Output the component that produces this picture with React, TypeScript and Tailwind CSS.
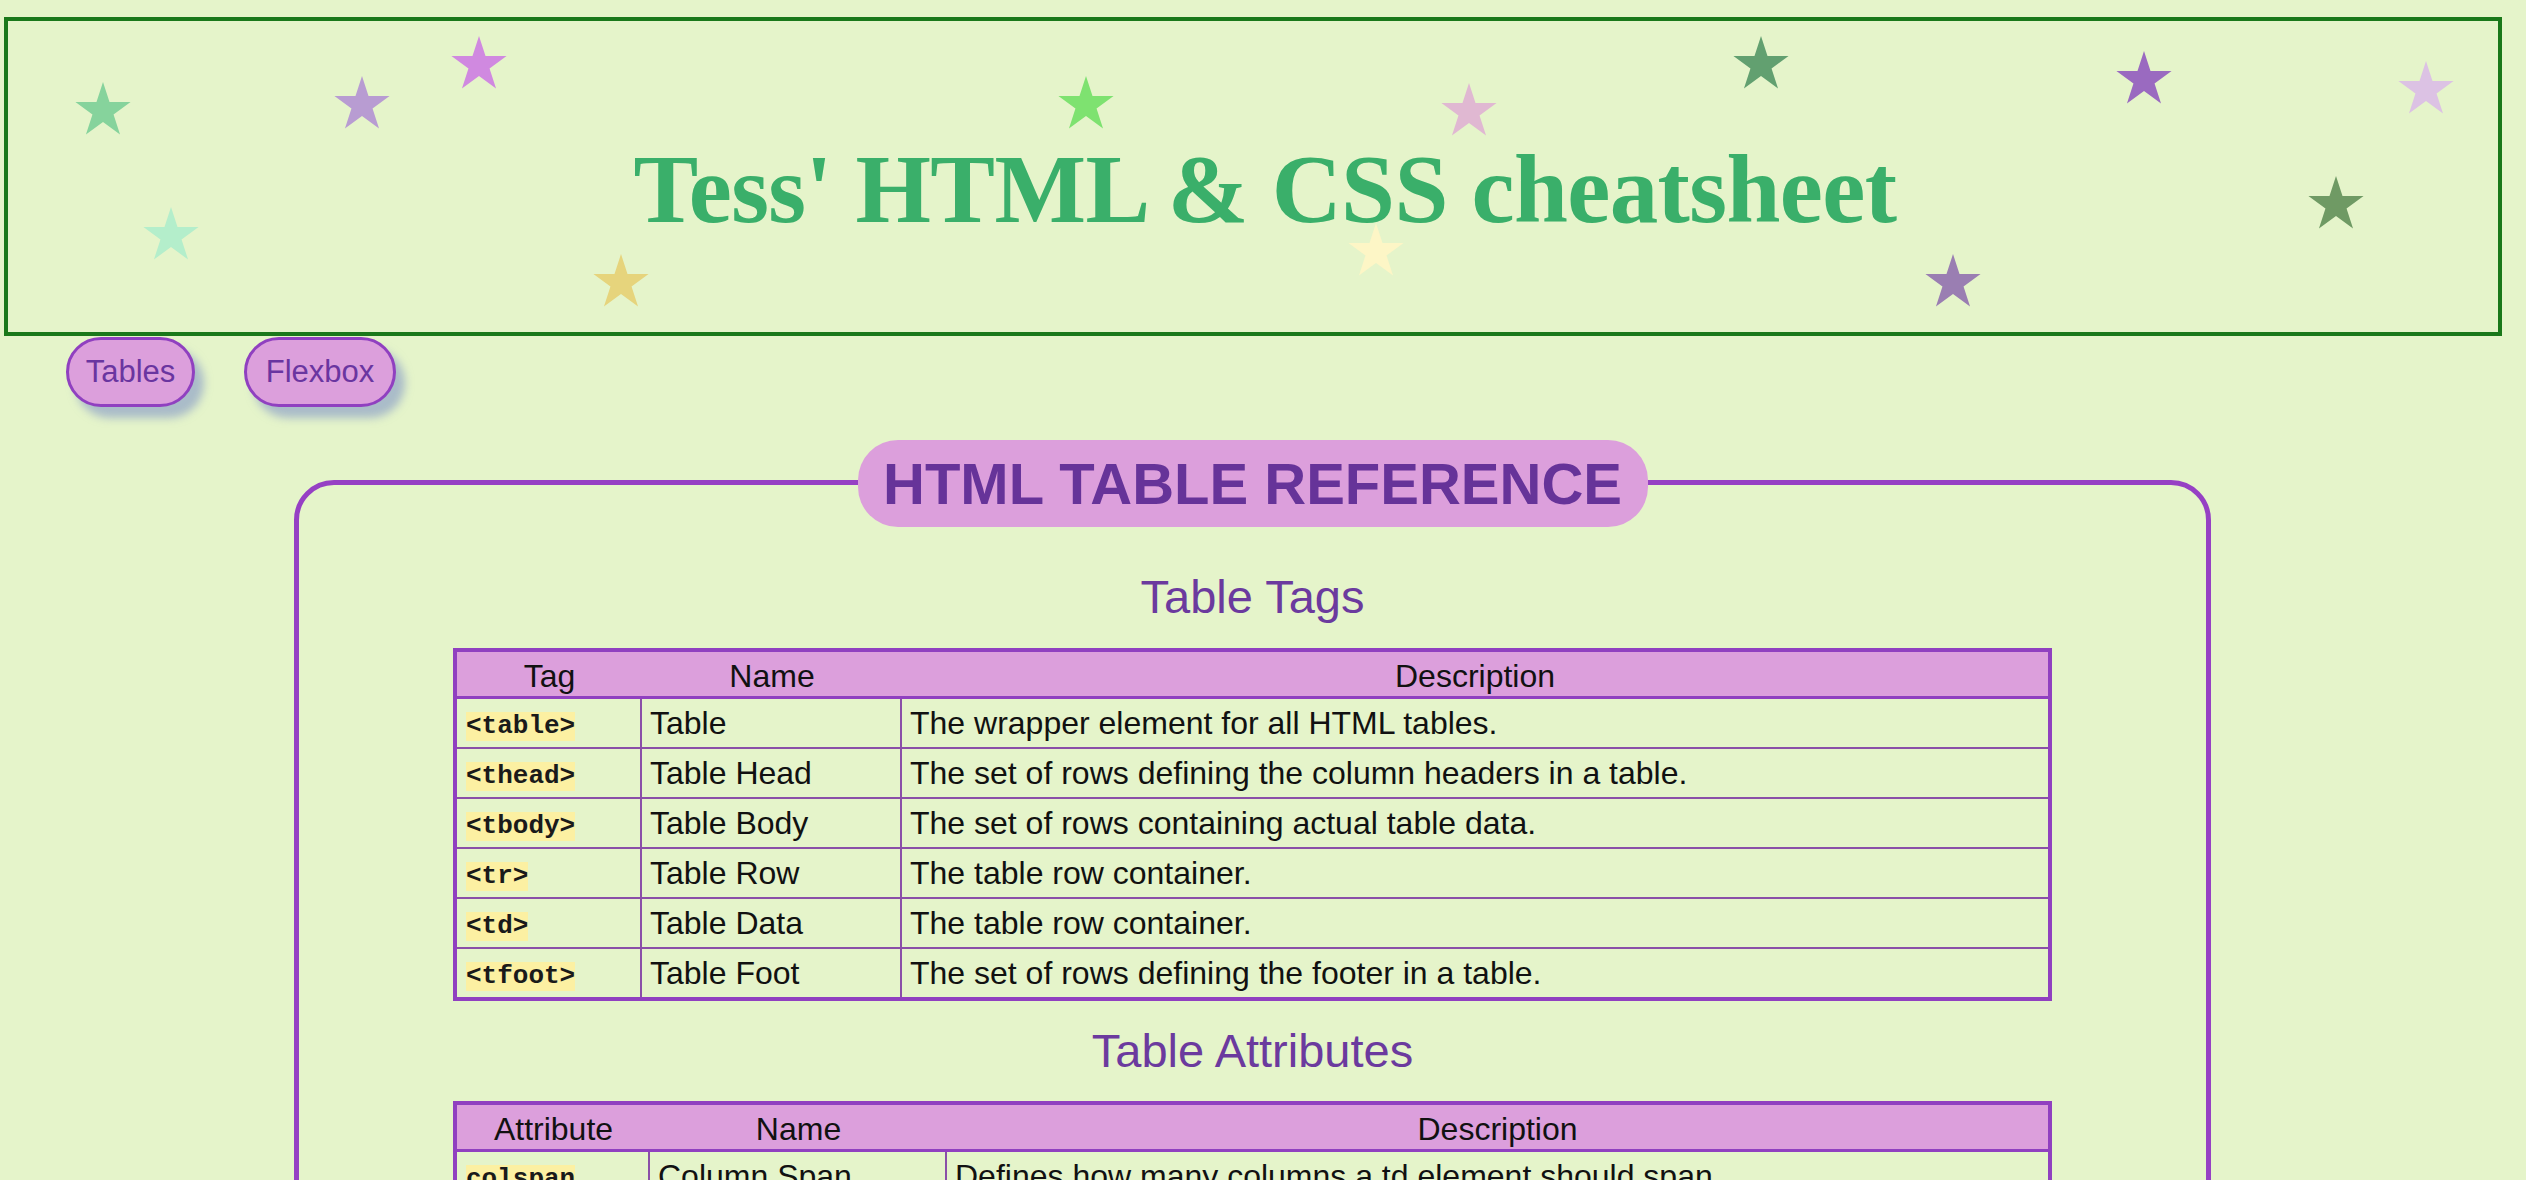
import React from 'react';

const stars = [
  { cls: "left-[67px] top-[61px]", color: "#86d39c" },
  { cls: "left-[326px] top-[55px]", color: "#b89cd2" },
  { cls: "left-[443px] top-[15px]", color: "#d089e0" },
  { cls: "left-[135px] top-[186px]", color: "#b4eecb" },
  { cls: "left-[585px] top-[233px]", color: "#e6d47c" },
  { cls: "left-[1050px] top-[55px]", color: "#7ee270" },
  { cls: "left-[1433px] top-[62px]", color: "#e0b8d2" },
  { cls: "left-[1340px] top-[202px]", color: "#fdf6c6" },
  { cls: "left-[1725px] top-[15px]", color: "#62a070" },
  { cls: "left-[2108px] top-[30px]", color: "#9a6ac0" },
  { cls: "left-[2390px] top-[40px]", color: "#dcc2e4" },
  { cls: "left-[2300px] top-[155px]", color: "#6f9a64" },
  { cls: "left-[1917px] top-[233px]", color: "#9a7eb2" },
];

const Star = ({ cls, color }: { cls: string; color: string }) => (
  <svg className={`absolute w-[56px] h-[53px] ${cls}`} viewBox="-28 -29 56 53">
    <polygon
      fill={color}
      points="0,-29 6.51,-8.96 27.58,-8.96 10.54,3.42 17.05,23.46 0,11.08 -17.05,23.46 -10.54,3.42 -27.58,-8.96 -6.51,-8.96"
    />
  </svg>
);

type Row = [string, string, string];

const tagRows: Row[] = [
  ["<table>", "Table", "The wrapper element for all HTML tables."],
  ["<thead>", "Table Head", "The set of rows defining the column headers in a table."],
  ["<tbody>", "Table Body", "The set of rows containing actual table data."],
  ["<tr>", "Table Row", "The table row container."],
  ["<td>", "Table Data", "The table row container."],
  ["<tfoot>", "Table Foot", "The set of rows defining the footer in a table."],
];

const attrRows: Row[] = [
  ["colspan", "Column Span", "Defines how many columns a td element should span."],
  ["rowspan", "Row Span", "Defines how many rows a td element should span."],
  ["scope", "Scope", "Specifies whether a header cell is for a column, row, or group."],
];

const RefTable = ({ grid, head, rows }: { grid: string; head: string[]; rows: Row[] }) => (
  <div className="mx-auto w-[1599px] border-4 border-[#9040c0] text-[32px] text-[#111]">
    <div className={`${grid} h-[47px] items-center bg-[#dc9fdc] border-b-[3px] border-[#9040c0]`}>
      {head.map((h) => (
        <div key={h} className="text-center">
          {h}
        </div>
      ))}
    </div>
    {rows.map(([code, name, desc]) => (
      <div key={code} className={`${grid} h-[50px] border-b-2 border-[#8a4fa8] last:border-b-0 last:h-[48px]`}>
        <div className="flex items-center pl-[9px] border-r-2 border-[#8a4fa8]">
          <code className="bg-[#fcf0a2] font-['Liberation_Mono',monospace] font-bold text-[26px] leading-[29px] mt-[6px] text-[#1a1a1a]">
            {code}
          </code>
        </div>
        <div className="flex items-center px-[8px] border-r-2 border-[#8a4fa8]">{name}</div>
        <div className="flex items-center px-[8px]">{desc}</div>
      </div>
    ))}
  </div>
);

export default function App() {
  return (
    <div className="min-h-screen bg-[#e5f4ca] pt-[17px] pb-[80px] font-['Liberation_Sans',Arial,sans-serif]">
      <header className="relative ml-[4px] w-[2498px] h-[319px] border-4 border-[#1a781a]">
        {stars.map((s, i) => (
          <Star key={i} cls={s.cls} color={s.color} />
        ))}
        <h1 className="relative pt-[120px] pl-[24px] text-center font-['Liberation_Serif',serif] font-bold text-[97px] leading-none tracking-[-0.6px] text-[#3aaf6a]">
          Tess' HTML &amp; CSS cheatsheet
        </h1>
      </header>

      <nav className="flex gap-[49px] pl-[66px] mt-[1px]">
        <a className="flex items-center justify-center w-[129px] h-[70px] rounded-[35px] border-[3px] border-[#9040c0] bg-[#dc9fdc] text-[31px] text-[#6a35a0] shadow-[9px_11px_9px_rgba(130,150,200,0.6)] cursor-pointer">
          Tables
        </a>
        <a className="flex items-center justify-center w-[152px] h-[70px] rounded-[35px] border-[3px] border-[#9040c0] bg-[#dc9fdc] text-[31px] text-[#6a35a0] shadow-[9px_11px_9px_rgba(130,150,200,0.6)] cursor-pointer">
          Flexbox
        </a>
      </nav>

      <section className="relative mt-[73px] ml-[294px] w-[1917px] rounded-[40px] border-[5px] border-[#9640c4] pt-[88px] pb-[60px]">
        <div className="absolute -top-[45px] left-1/2 -translate-x-1/2 w-[790px] h-[87px] rounded-[40px] bg-[#dc9fdc] flex items-center justify-center text-[58px] leading-none font-bold text-[#663399]">
          HTML TABLE REFERENCE
        </div>

        <h2 className="text-center text-[47px] leading-[47px] text-[#6b3a9e] mb-[28px]">Table Tags</h2>
        <RefTable grid="grid grid-cols-[185px_260px_1fr]" head={["Tag", "Name", "Description"]} rows={tagRows} />

        <h2 className="text-center text-[47px] leading-[47px] text-[#6b3a9e] mt-[26px] mb-[27px]">Table Attributes</h2>
        <RefTable grid="grid grid-cols-[193px_297px_1fr]" head={["Attribute", "Name", "Description"]} rows={attrRows} />
      </section>
    </div>
  );
}
